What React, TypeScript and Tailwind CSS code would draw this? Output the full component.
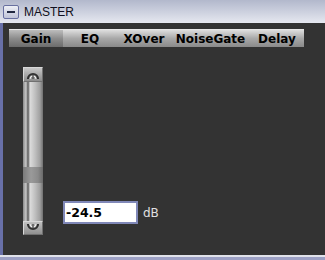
import React, { useState } from "react";

const tabs = ["Gain", "EQ", "XOver", "NoiseGate", "Delay"];
const tabWidths = ["w-[54px]", "w-[54px]", "w-[54px]", "w-[79px]", "w-[54px]"];

const CapArrow: React.FC<{ flip?: boolean }> = ({ flip }) => (
  <svg width="14" height="10" viewBox="0 0 14 10" className={flip ? "rotate-180" : ""}>
    <path d="M2 9 A5 5 0 0 1 12 9" fill="none" stroke="#303030" strokeWidth="2.2" />
    <path d="M4 9 A3 3 0 0 1 10 9" fill="none" stroke="#f0f0f0" strokeWidth="1" />
    <path d="M7 3 L7 9" stroke="#404040" strokeWidth="1.2" />
  </svg>
);

const Slider: React.FC = () => (
  <div className="flex flex-col w-[20px] h-[168px]">
    <div className="h-[15px] flex items-center justify-center border border-[#d8d8d8] border-r-[#707070] border-b-[#707070] bg-gradient-to-b from-[#c8c8c8] to-[#8c8c8c]">
      <CapArrow />
    </div>
    <div className="flex-1 flex flex-col">
      <div className="h-[85px] bg-[linear-gradient(to_right,#8a8a8a_0%,#c8c8c8_15%,#5a5a5a_25%,#dcdcdc_35%,#c0c0c0_60%,#a0a0a0_85%,#707070_100%)]" />
      <div className="h-[16px] bg-[linear-gradient(to_right,#7a7a7a,#9a9a9a_40%,#8a8a8a_75%,#6a6a6a)]" />
      <div className="flex-1 bg-[linear-gradient(to_right,#8a8a8a_0%,#c8c8c8_15%,#5a5a5a_25%,#dcdcdc_35%,#c0c0c0_60%,#a0a0a0_85%,#707070_100%)]" />
    </div>
    <div className="h-[14px] flex items-center justify-center border border-[#d8d8d8] border-r-[#707070] border-b-[#707070] bg-gradient-to-b from-[#c0c0c0] to-[#909090]">
      <CapArrow flip />
    </div>
  </div>
);

export default function App() {
  const [active, setActive] = useState(0);
  return (
    <div className="w-[325px] h-[260px] flex flex-col overflow-hidden font-['Liberation_Sans',Arial,sans-serif]">
      <div className="h-[23px] flex items-center gap-[5px] pl-[3px] bg-gradient-to-b from-[#b2b8cc] to-[#e6e8f0]">
        <div className="w-[16px] h-[14px] rounded-[2px] border border-[#6870a0] bg-gradient-to-b from-[#eef0f6] to-[#c0c4d8] flex items-center justify-center">
          <div className="w-[8px] h-[2px] bg-[#202840]" />
        </div>
        <span className="text-[12px] text-[#101020]">MASTER</span>
      </div>
      <div className="flex-1 flex flex-col border-l-[3px] border-[#6870a8] bg-[#333333] pl-[6px] pt-[6px]">
        <div className="flex w-[295px] h-[18px] text-[12px] font-bold text-black font-['DejaVu_Sans',Verdana,sans-serif]">
          {tabs.map((t, i) => (
            <button
              key={t}
              onClick={() => setActive(i)}
              className={`h-full flex items-center justify-center border-t border-[#e8e8e8] ${
                i === active
                  ? "bg-gradient-to-b from-[#bdbdbd] via-[#8c8c8c] to-[#6c6c6c]"
                  : "bg-gradient-to-b from-[#dedede] via-[#a8a8a8] to-[#8a8a8a]"
              } ${tabWidths[i]}`}
            >
              {t}
            </button>
          ))}
        </div>
        <div className="flex mt-[20px] ml-[14px]">
          <Slider />
          <div className="flex items-center gap-[5px] ml-[20px] mt-[134px] h-[23px] font-['DejaVu_Sans',Verdana,sans-serif]">
            <input
              defaultValue="-24.5"
              className="w-[75px] h-[23px] border-2 border-[#8088b8] bg-white px-[1px] text-[12.5px] font-bold text-black outline-none"
            />
            <span className="text-[12px] text-[#e0e0e0]">dB</span>
          </div>
        </div>
      </div>
      <div className="h-[2px] bg-[#e0e2ea]" />
      <div className="h-[3px] bg-[#9ca0c4]" />
    </div>
  );
}
